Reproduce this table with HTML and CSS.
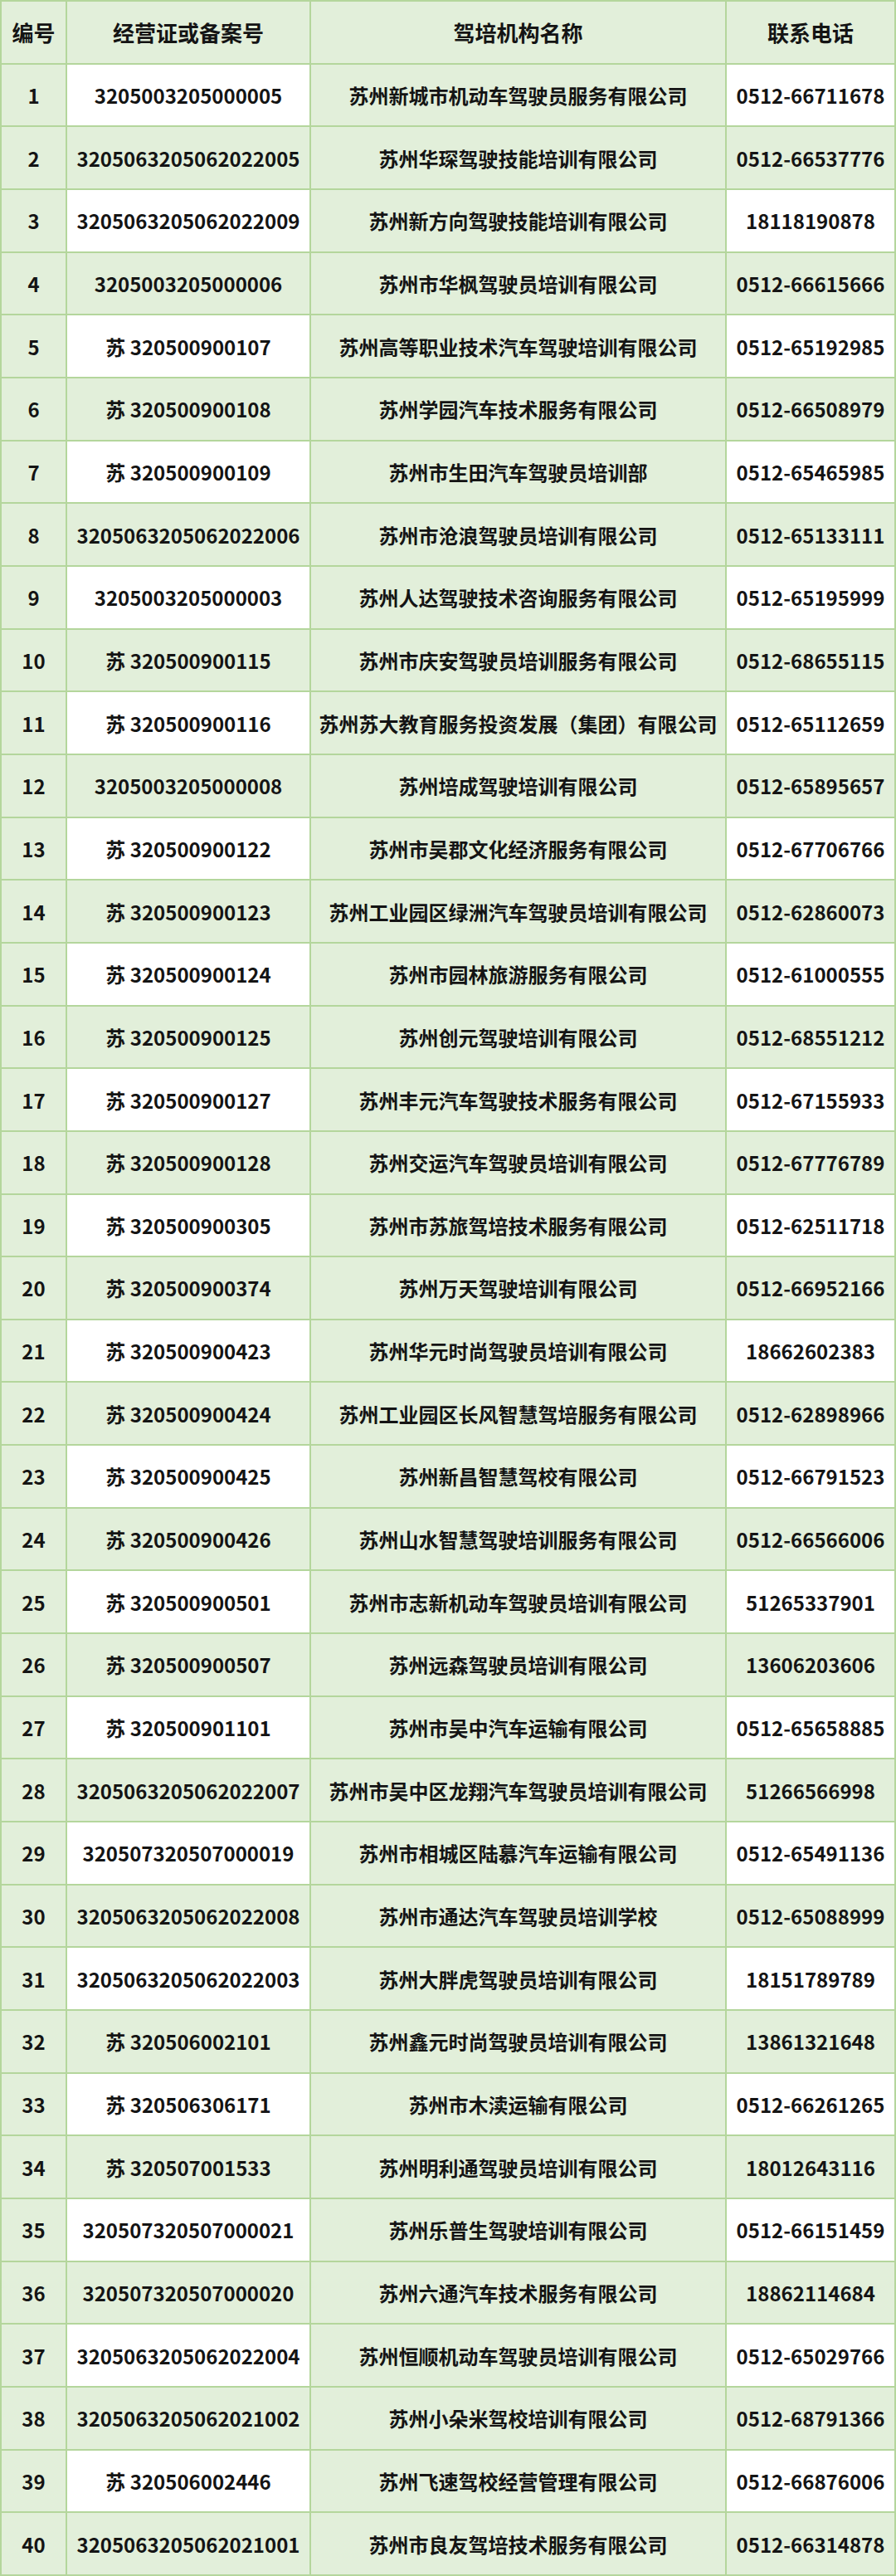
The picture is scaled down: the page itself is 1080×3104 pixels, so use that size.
FILE: index.html
```html
<!DOCTYPE html>
<html lang="zh-CN">
<head>
<meta charset="utf-8">
<title>驾培机构名单</title>
<link rel="stylesheet" href="styles.css">
</head>
<body>
<div class="sheet">
  <div class="c h">编号</div><div class="c h">经营证或备案号</div><div class="c h">驾培机构名称</div><div class="c h">联系电话</div>

  <div class="c">1</div><div class="c w">3205003205000005</div><div class="c">苏州新城市机动车驾驶员服务有限公司</div><div class="c w">0512-66711678</div>
  <div class="c">2</div><div class="c">3205063205062022005</div><div class="c">苏州华琛驾驶技能培训有限公司</div><div class="c">0512-66537776</div>
  <div class="c">3</div><div class="c w">3205063205062022009</div><div class="c">苏州新方向驾驶技能培训有限公司</div><div class="c w">18118190878</div>
  <div class="c">4</div><div class="c">3205003205000006</div><div class="c">苏州市华枫驾驶员培训有限公司</div><div class="c">0512-66615666</div>
  <div class="c">5</div><div class="c w">苏 320500900107</div><div class="c">苏州高等职业技术汽车驾驶培训有限公司</div><div class="c w">0512-65192985</div>
  <div class="c">6</div><div class="c">苏 320500900108</div><div class="c">苏州学园汽车技术服务有限公司</div><div class="c">0512-66508979</div>
  <div class="c">7</div><div class="c w">苏 320500900109</div><div class="c">苏州市生田汽车驾驶员培训部</div><div class="c w">0512-65465985</div>
  <div class="c">8</div><div class="c">3205063205062022006</div><div class="c">苏州市沧浪驾驶员培训有限公司</div><div class="c">0512-65133111</div>
  <div class="c">9</div><div class="c w">3205003205000003</div><div class="c">苏州人达驾驶技术咨询服务有限公司</div><div class="c w">0512-65195999</div>
  <div class="c">10</div><div class="c">苏 320500900115</div><div class="c">苏州市庆安驾驶员培训服务有限公司</div><div class="c">0512-68655115</div>
  <div class="c">11</div><div class="c w">苏 320500900116</div><div class="c">苏州苏大教育服务投资发展（集团）有限公司</div><div class="c w">0512-65112659</div>
  <div class="c">12</div><div class="c">3205003205000008</div><div class="c">苏州培成驾驶培训有限公司</div><div class="c">0512-65895657</div>
  <div class="c">13</div><div class="c w">苏 320500900122</div><div class="c">苏州市吴郡文化经济服务有限公司</div><div class="c w">0512-67706766</div>
  <div class="c">14</div><div class="c">苏 320500900123</div><div class="c">苏州工业园区绿洲汽车驾驶员培训有限公司</div><div class="c">0512-62860073</div>
  <div class="c">15</div><div class="c w">苏 320500900124</div><div class="c">苏州市园林旅游服务有限公司</div><div class="c w">0512-61000555</div>
  <div class="c">16</div><div class="c">苏 320500900125</div><div class="c">苏州创元驾驶培训有限公司</div><div class="c">0512-68551212</div>
  <div class="c">17</div><div class="c w">苏 320500900127</div><div class="c">苏州丰元汽车驾驶技术服务有限公司</div><div class="c w">0512-67155933</div>
  <div class="c">18</div><div class="c">苏 320500900128</div><div class="c">苏州交运汽车驾驶员培训有限公司</div><div class="c">0512-67776789</div>
  <div class="c">19</div><div class="c w">苏 320500900305</div><div class="c">苏州市苏旅驾培技术服务有限公司</div><div class="c w">0512-62511718</div>
  <div class="c">20</div><div class="c">苏 320500900374</div><div class="c">苏州万天驾驶培训有限公司</div><div class="c">0512-66952166</div>
  <div class="c">21</div><div class="c w">苏 320500900423</div><div class="c">苏州华元时尚驾驶员培训有限公司</div><div class="c w">18662602383</div>
  <div class="c">22</div><div class="c">苏 320500900424</div><div class="c">苏州工业园区长风智慧驾培服务有限公司</div><div class="c">0512-62898966</div>
  <div class="c">23</div><div class="c w">苏 320500900425</div><div class="c">苏州新昌智慧驾校有限公司</div><div class="c w">0512-66791523</div>
  <div class="c">24</div><div class="c">苏 320500900426</div><div class="c">苏州山水智慧驾驶培训服务有限公司</div><div class="c">0512-66566006</div>
  <div class="c">25</div><div class="c w">苏 320500900501</div><div class="c">苏州市志新机动车驾驶员培训有限公司</div><div class="c w">51265337901</div>
  <div class="c">26</div><div class="c">苏 320500900507</div><div class="c">苏州远森驾驶员培训有限公司</div><div class="c">13606203606</div>
  <div class="c">27</div><div class="c w">苏 320500901101</div><div class="c">苏州市吴中汽车运输有限公司</div><div class="c w">0512-65658885</div>
  <div class="c">28</div><div class="c">3205063205062022007</div><div class="c">苏州市吴中区龙翔汽车驾驶员培训有限公司</div><div class="c">51266566998</div>
  <div class="c">29</div><div class="c w">320507320507000019</div><div class="c">苏州市相城区陆慕汽车运输有限公司</div><div class="c w">0512-65491136</div>
  <div class="c">30</div><div class="c">3205063205062022008</div><div class="c">苏州市通达汽车驾驶员培训学校</div><div class="c">0512-65088999</div>
  <div class="c">31</div><div class="c w">3205063205062022003</div><div class="c">苏州大胖虎驾驶员培训有限公司</div><div class="c w">18151789789</div>
  <div class="c">32</div><div class="c">苏 320506002101</div><div class="c">苏州鑫元时尚驾驶员培训有限公司</div><div class="c">13861321648</div>
  <div class="c">33</div><div class="c w">苏 320506306171</div><div class="c">苏州市木渎运输有限公司</div><div class="c w">0512-66261265</div>
  <div class="c">34</div><div class="c">苏 320507001533</div><div class="c">苏州明利通驾驶员培训有限公司</div><div class="c">18012643116</div>
  <div class="c">35</div><div class="c w">320507320507000021</div><div class="c">苏州乐普生驾驶培训有限公司</div><div class="c w">0512-66151459</div>
  <div class="c">36</div><div class="c">320507320507000020</div><div class="c">苏州六通汽车技术服务有限公司</div><div class="c">18862114684</div>
  <div class="c">37</div><div class="c w">3205063205062022004</div><div class="c">苏州恒顺机动车驾驶员培训有限公司</div><div class="c w">0512-65029766</div>
  <div class="c">38</div><div class="c">3205063205062021002</div><div class="c">苏州小朵米驾校培训有限公司</div><div class="c">0512-68791366</div>
  <div class="c">39</div><div class="c w">苏 320506002446</div><div class="c">苏州飞速驾校经营管理有限公司</div><div class="c w">0512-66876006</div>
  <div class="c">40</div><div class="c">3205063205062021001</div><div class="c">苏州市良友驾培技术服务有限公司</div><div class="c">0512-66314878</div>
</div>
</body>
</html>
```
FILE: styles.css
```css
html, body {
  margin: 0;
  padding: 0;
  background: #e2efda;
}

.sheet {
  box-sizing: border-box;
  width: 1080px;
  height: 3104px;
  padding: 2px;
  display: grid;
  grid-template-columns: 77px 292px 499px 202px;
  grid-template-rows: repeat(41, 1fr);
  gap: 2px;
  background: #b4d69c;
  font-family: "Noto Sans CJK SC", "Noto Sans", sans-serif;
  font-weight: 700;
  font-size: 24px;
  color: #141414;
}

.c {
  background: #e2efda;
  display: flex;
  align-items: center;
  justify-content: center;
  text-align: center;
  white-space: nowrap;
  overflow: hidden;
}

.c.w {
  background: #ffffff;
}

.h {
  font-size: 26px;
}
```
